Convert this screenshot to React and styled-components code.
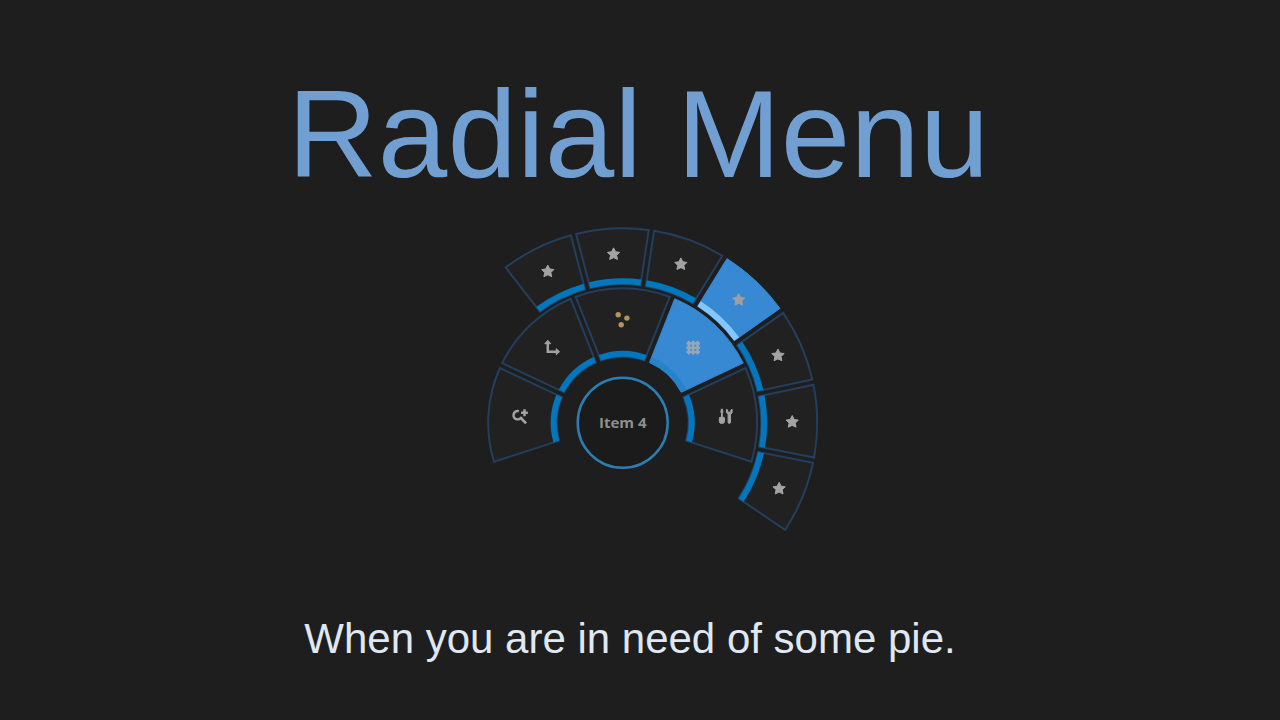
import styled, { createGlobalStyle } from "styled-components";

const GlobalStyle = createGlobalStyle`
  body {
    margin: 0;
    background: #1e1e1e;
    font-family: "Liberation Sans", Arial, sans-serif;
  }
`;

const Container = styled.main`
  display: flex;
  flex-direction: column;
  align-items: center;
  box-sizing: border-box;
  min-height: 100vh;
  padding: 64px 20px 40px;
  text-align: center;
`;

const Title = styled.h1`
  margin: 0;
  padding-right: 3px;
  font-size: 125px;
  font-weight: 400;
  line-height: 140px;
  color: #729fd2;
`;

const Menu = styled.svg`
  width: 400px;
  max-width: 100%;
  margin-top: 22px;
`;

const Slice = styled.path`
  fill: ${({ $active }) => ($active ? "#3789d3" : "#212121")};
  stroke: ${({ $active }) => ($active ? "#3585d2" : "#233f5d")};
  stroke-width: ${({ $active }) => ($active ? 1 : 2)};
`;

const Band = styled.path`
  fill: ${({ $tone }) => $tone};
`;

const Hub = styled.circle`
  fill: #1b1b1b;
  stroke: #2c7eb2;
  stroke-width: 2.5;
`;

const HubLabel = styled.text`
  fill: #8f8f8f;
  font-family: "Open Sans", "Noto Sans", sans-serif;
  font-size: 15px;
  font-weight: 700;
  text-anchor: middle;
`;

const Glyph = styled.g`
  fill: none;
  stroke: #a3a3a3;
  stroke-width: 2.5;
`;

const Solid = styled.path`
  fill: ${({ $tone }) => $tone || "#a3a3a3"};
  stroke: ${({ $tone }) => $tone || "#a3a3a3"};
  stroke-width: 1;
  stroke-linejoin: round;
`;

const Tagline = styled.p`
  margin: 83px 0 0;
  padding-right: 20px;
  font-size: 42px;
  line-height: 48px;
  color: #dfe8f3;
`;

const HALF_GAP = 2.7;
const BLUE = "#0277bd";

const point = (r, angle) =>
  `${(r * Math.cos(angle)).toFixed(2)} ${(-r * Math.sin(angle)).toFixed(2)}`;

// ring segment whose straight sides keep an even distance to its neighbours
const segment = (inner, outer, middle, span) => {
  const mid = (middle * Math.PI) / 180;
  const half = (span * Math.PI) / 360;
  const a = half - Math.asin(HALF_GAP / outer);
  const b = half - Math.asin(HALF_GAP / inner);
  return `M${point(inner, mid + b)} L${point(outer, mid + a)}
    A${outer} ${outer} 0 0 1 ${point(outer, mid - a)}
    L${point(inner, mid - b)}
    A${inner} ${inner} 0 0 0 ${point(inner, mid + b)}Z`;
};

const Star = ({ tone }) => (
  <Solid
    $tone={tone}
    d="M0 -5.7L2 -1.8L6.1 -1.2L3.1 1.8L3.9 5.9L0 4.1L-3.9 5.9L-3.1 1.8L-6.1 -1.2L-2 -1.8Z"
  />
);

const ZoomIcon = () => (
  <Glyph>
    <path d="M-1 -5.2A4.2 4.2 0 1 0 1.6 0.6M4.6 -7V-0.2M1.2 -3.6H8" />
    <path d="M0.4 1.2L6.2 7" strokeWidth="2.6" />
  </Glyph>
);

const AxesIcon = () => (
  <Glyph>
    <path d="M-4.4 -5V4H5" />
    <Solid d="M-4.4 -7.4L-1.4 -4H-7.4ZM7.4 4L4 1V7Z" />
  </Glyph>
);

const DotsIcon = () => (
  <g fill="#b3945f">
    <circle cx="-4.5" cy="-5" r="2.7" />
    <circle cx="4.2" cy="-1.7" r="2.7" />
    <circle cx="-1.5" cy="5" r="2.7" />
  </g>
);

const GridIcon = () => (
  <g stroke="#95a6b9" strokeWidth="2.6" strokeLinecap="round">
    <path d="M-4.3 -5.6V5.6M0 -5.8V5.8M4.3 -5.6V5.6M-5.6 -4.3H5.6M-5.8 0H5.8M-5.6 4.3H5.6" />
  </g>
);

const ToolsIcon = () => (
  <g>
    <Solid d="M-4.2 -7.2H-3L-2.6 -4L-3.2 -3V1H-1.6Q-1 1 -1 2V5Q-1 7.2 -3.6 7.2Q-6.2 7.2 -6.2 5V2Q-6.2 1 -5.6 1H-4V-3L-4.6 -4Z" />
    <Solid d="M1 -7V-3.6L2.6 -1.8V6.4Q3.8 7.8 5 6.4V-1.8L6.6 -3.6V-7L5.4 -6.4V-4.2H2.2V-6.4Z" />
  </g>
);

const tools = [
  { name: "zoom", Icon: ZoomIcon },
  { name: "axes", Icon: AxesIcon },
  { name: "dots", Icon: DotsIcon },
  { name: "grid", Icon: GridIcon, active: true, band: "#2583c8" },
  { name: "tools", Icon: ToolsIcon },
];

const favourites = [1, 2, 3, 4, 5, 6, 7].map((n) => ({
  name: `star-${n}`,
  Icon: Star,
  active: n === 4,
  band: n === 4 ? "#85c6ff" : BLUE,
  tone: n === 4 ? "#a09f9f" : undefined,
}));

const Ring = ({ items, inner, outer, iconRadius, start, sweep }) => {
  const span = sweep / items.length;
  return items.map(({ name, Icon, active, band = BLUE, tone }, i) => {
    const middle = start - span * (i + 0.5);
    const angle = (middle * Math.PI) / 180;
    return (
      <g key={name}>
        <Slice $active={active} d={segment(inner, outer, middle, span)} />
        <Band $tone={band} d={segment(inner, inner + 6, middle, span)} />
        <g transform={`translate(${point(iconRadius, angle)})`}>
          <Icon tone={tone} />
        </g>
      </g>
    );
  });
};

const App = () => {
  return (
    <>
      <GlobalStyle />
      <Container>
        <Title>Radial Menu</Title>
        <Menu viewBox="0 0 400 306" role="img" aria-label="Radial menu, Item 4">
          <g transform="translate(182.7 196.8)">
            <Ring
              items={favourites}
              inner={138.5}
              outer={194.5}
              iconRadius={169.5}
              start={127.8}
              sweep={162}
            />
            <Ring
              items={tools}
              inner={66}
              outer={134.5}
              iconRadius={103}
              start={198}
              sweep={216}
            />
            <Hub r="45" />
            <HubLabel y="5">Item 4</HubLabel>
          </g>
        </Menu>
        <Tagline>When you are in need of some pie.</Tagline>
      </Container>
    </>
  );
};

export default App;
